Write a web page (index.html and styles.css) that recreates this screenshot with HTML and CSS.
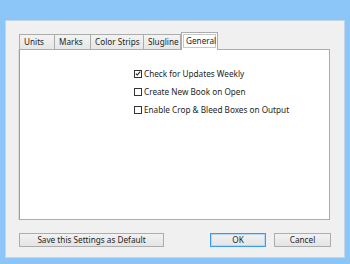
FILE: index.html
```html
<!DOCTYPE html>
<html>
<head>
<meta charset="utf-8">
<link rel="stylesheet" href="styles.css">
</head>
<body>
<div class="window">
  <div class="client">
    <div class="tabs">
      <div class="tab t-units">Units</div>
      <div class="tab t-marks">Marks</div>
      <div class="tab t-strips">Color Strips</div>
      <div class="tab t-slug">Slugline</div>
      <div class="tab active t-general"><span class="tab-inner">General</span></div>
    </div>
    <div class="panel">
      <div class="options">
        <label class="opt"><span class="box"><svg viewBox="0 0 7 7" width="7" height="7"><path d="M1 3.6 L2.7 5.3 L6 1.3" fill="none" stroke="#1a1a1a" stroke-width="1.2"/></svg></span>Check for Updates Weekly</label>
        <label class="opt"><span class="box"></span>Create New Book on Open</label>
        <label class="opt"><span class="box"></span>Enable Crop &amp; Bleed Boxes on Output</label>
      </div>
    </div>
    <div class="footer">
      <button class="btn btn-save">Save this Settings as Default</button>
      <div class="right-btns">
        <button class="btn btn-ok default">OK</button>
        <button class="btn btn-cancel">Cancel</button>
      </div>
    </div>
  </div>
</div>
</body>
</html>
```

FILE: styles.css
```css
* { box-sizing: border-box; }
html, body { margin: 0; padding: 0; }
body {
  width: 350px;
  height: 264px;
  overflow: hidden;
  font-family: "Noto Sans", "Open Sans", sans-serif;
  font-size: 8.2px;
  color: #1e1e1e;
}
.window {
  width: 350px;
  height: 264px;
  background: #8cc5f8;
  padding: 20px 5px 6px 5px;
}
.client {
  height: 238px;
  background: #f0f0f0;
  border: 1px solid #c3d6e8;
  padding: 11px 14px 0 13px;
  display: flex;
  flex-direction: column;
}
.tabs {
  display: flex;
  align-items: flex-end;
  height: 17px;
  position: relative;
  z-index: 1;
}
.tab {
  height: 15px;
  border: 1px solid #acacac;
  border-bottom: none;
  border-right: none;
  background: linear-gradient(#f3f3f3, #e6e6e6);
  padding: 0 0 0 4px;
  line-height: 14px;
  white-space: nowrap;
}
.t-units { width: 35px; }
.t-marks { width: 36px; }
.t-strips { width: 53px; }
.t-slug { width: 38px; border-right: 1px solid #acacac; }
.tab.active {
  height: 18px;
  width: 37px;
  background: #ffffff;
  border: 1px solid #acacac;
  border-bottom: none;
  padding: 1px 1px 0 1px;
  margin-bottom: -1px;
}
.tab-inner {
  display: block;
  height: 14px;
  border: 1px solid #c8c8c8;
  padding: 0 2px;
  line-height: 12px;
}
.panel {
  height: 171px;
  width: 311px;
  background: #ffffff;
  border: 1px solid #acacac;
  border-left-color: #a0a0a0;
  box-shadow: -1px 0 0 #dcdcdc;
  padding: 17px 0 0 114px;
}
.options {
  display: flex;
  flex-direction: column;
  gap: 5px;
}
.opt {
  display: flex;
  align-items: center;
  height: 13px;
  white-space: nowrap;
}
.box {
  width: 8px;
  height: 8px;
  border: 1px solid #333333;
  background: #ffffff;
  margin-right: 2px;
  display: flex;
  align-items: center;
  justify-content: center;
}
.box svg { display: block; }
.footer {
  display: flex;
  justify-content: space-between;
  margin-top: 13px;
  width: 312px;
}
.right-btns {
  display: flex;
  gap: 8px;
}
.btn {
  font-family: "Noto Sans", "Open Sans", sans-serif;
  font-size: 8.2px;
  color: #1e1e1e;
  height: 14px;
  padding: 0;
  line-height: 12px;
  border: 1px solid #acacac;
  background: linear-gradient(#f2f2f2, #e4e4e4);
  border-radius: 0;
}
.btn-save { width: 145px; }
.btn-ok { width: 56px; }
.btn-cancel { width: 57px; }
.btn.default {
  border-color: #3c9af0;
  box-shadow: inset 0 0 0 1px #b8d8f8;
}
```
